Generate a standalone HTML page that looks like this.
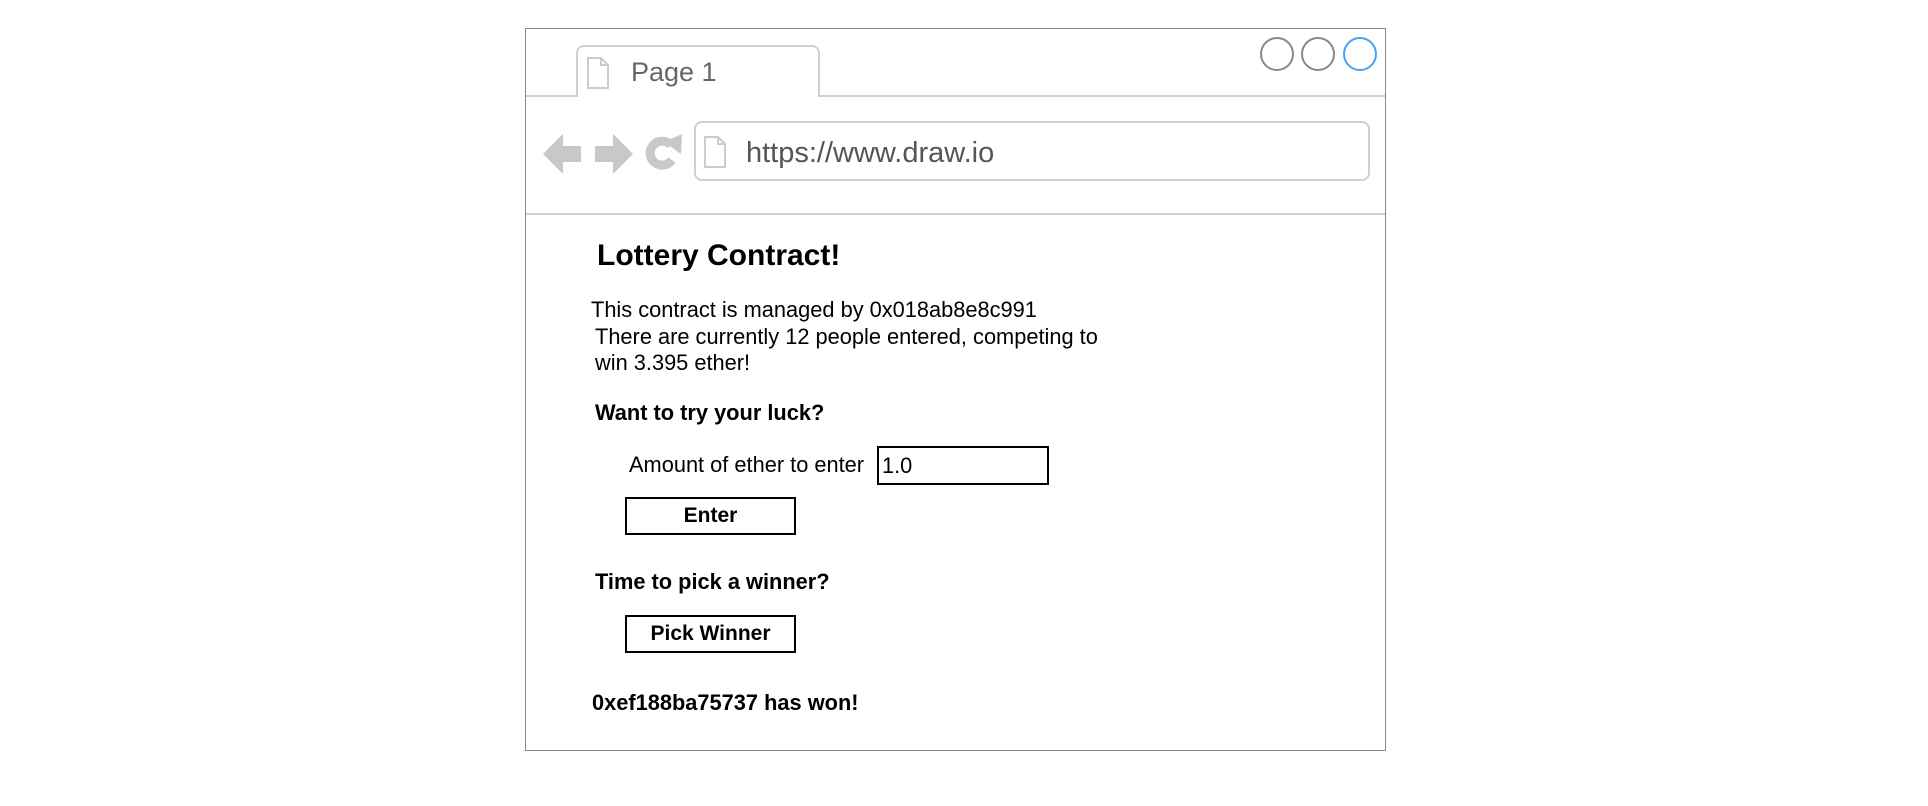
<!DOCTYPE html>
<html><head><style>
body{margin:0;background:#fff;width:1928px;height:806px;position:relative;overflow:hidden;font-family:"Liberation Sans",Arial,sans-serif;}
.a{position:absolute;}
.t{position:absolute;white-space:nowrap;color:#000;}
.btn{position:absolute;border:2.5px solid #000;box-sizing:border-box;font-weight:bold;font-size:21px;text-align:center;}
</style></head><body>
<div class="a" style="left:525px;top:28px;width:861px;height:723px;border:1.5px solid #888;box-sizing:border-box;"></div>
<div class="a" style="left:526px;top:95px;width:859px;height:2px;background:#d0d0d0;"></div>
<div class="a" style="left:576px;top:45px;width:244px;height:52px;border:2px solid #d0d0d0;border-bottom:none;border-radius:8px 8px 0 0;background:#fff;box-sizing:border-box;"></div>
<svg class="a" style="left:586px;top:56px" width="24" height="34"><path d="M2 2H15L22 9V32H2Z M15 2V9H22" fill="#fff" stroke="#ccc" stroke-width="2"/></svg>
<div class="t" style="left:631px;top:57px;font-size:27px;color:#666;">Page 1</div>
<svg class="a" style="left:1258px;top:36px" width="125" height="38">
<circle cx="19" cy="18" r="16" fill="none" stroke="#888" stroke-width="2"/>
<circle cx="60" cy="18" r="16" fill="none" stroke="#888" stroke-width="2"/>
<circle cx="102" cy="18" r="16" fill="none" stroke="#4aa3f0" stroke-width="2"/>
</svg>
<svg class="a" style="left:540px;top:130px" width="150" height="46">
<path d="M3 24L23 4V16H41V32H23V44Z" fill="#c8c8c8"/>
<path d="M93 24L73 4V16H55V32H73V44Z" fill="#c8c8c8"/>
<path d="M131 15A12 12 0 1 0 132 30" fill="none" stroke="#c8c8c8" stroke-width="9"/>
<path d="M124 12L142 4L141 24Z" fill="#c8c8c8"/>
</svg>
<div class="a" style="left:694px;top:121px;width:676px;height:60px;border:2px solid #d0d0d0;border-radius:8px;box-sizing:border-box;"></div>
<svg class="a" style="left:703px;top:135px" width="24" height="34"><path d="M2 2H15L22 9V32H2Z M15 2V9H22" fill="#fff" stroke="#ccc" stroke-width="2"/></svg>
<div class="t" style="left:746px;top:137px;font-size:29px;color:#555;">https://www.draw.io</div>
<div class="a" style="left:526px;top:213px;width:859px;height:2px;background:#d0d0d0;"></div>
<div class="t" style="left:597px;top:239px;font-size:30px;font-weight:bold;">Lottery Contract!</div>
<div class="t" style="left:591px;top:297px;font-size:21.8px;">This contract is managed by 0x018ab8e8c991</div>
<div class="t" style="left:595px;top:324px;font-size:21.8px;">There are currently 12 people entered, competing to</div>
<div class="t" style="left:595px;top:350px;font-size:21.8px;">win 3.395 ether!</div>
<div class="t" style="left:595px;top:400px;font-size:21.8px;font-weight:bold;">Want to try your luck?</div>
<div class="t" style="left:629px;top:452px;font-size:21.8px;">Amount of ether to enter</div>
<div class="a" style="left:877px;top:446px;width:172px;height:39px;border:2.5px solid #000;box-sizing:border-box;"></div>
<div class="t" style="left:882px;top:453px;font-size:21.8px;">1.0</div>
<div class="btn" style="left:625px;top:497px;width:171px;height:38px;line-height:33px;">Enter</div>
<div class="t" style="left:595px;top:569px;font-size:21.8px;font-weight:bold;">Time to pick a winner?</div>
<div class="btn" style="left:625px;top:615px;width:171px;height:38px;line-height:33px;">Pick Winner</div>
<div class="t" style="left:592px;top:690px;font-size:21.8px;font-weight:bold;">0xef188ba75737 has won!</div>
</body></html>
